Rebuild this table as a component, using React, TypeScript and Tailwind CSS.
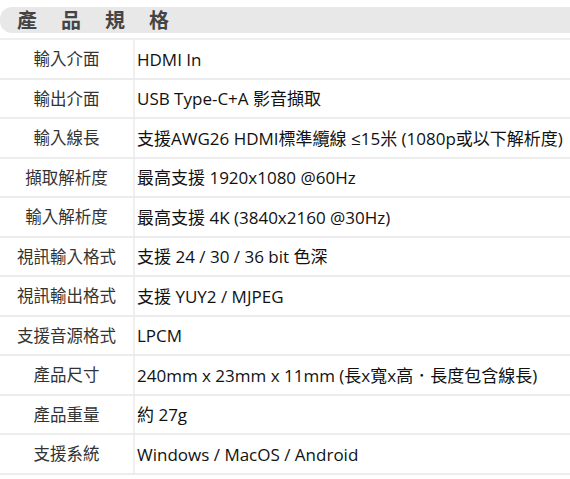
const specs: [string, string][] = [
  ["輸入介面", "HDMI In"],
  ["輸出介面", "USB Type-C+A 影音擷取"],
  ["輸入線長", "支援AWG26 HDMI標準纜線 ≤15米 (1080p或以下解析度)"],
  ["擷取解析度", "最高支援 1920x1080 @60Hz"],
  ["輸入解析度", "最高支援 4K (3840x2160 @30Hz)"],
  ["視訊輸入格式", "支援 24 / 30 / 36 bit 色深"],
  ["視訊輸出格式", "支援 YUY2 / MJPEG"],
  ["支援音源格式", "LPCM"],
  ["產品尺寸", "240mm x 23mm x 11mm (長x寬x高．長度包含線長)"],
  ["產品重量", "約 27g"],
  ["支援系統", "Windows / MacOS / Android"],
];

export default function App() {
  return (
    <div
      className="w-[570px] h-[479px] bg-white overflow-hidden"
      style={{ fontFamily: '"Open Sans", "Noto Sans CJK TC", sans-serif' }}
    >
      <div className="pt-[7px]">
        <div className="h-[26px] rounded-l-[12px] bg-[#e8e8e8] flex items-center pl-[17px]">
          <span
            className="text-[20px] font-bold text-[#444] tracking-[24px] leading-none"
            style={{ fontFamily: '"Noto Sans CJK TC", sans-serif' }}
          >
            產品規格
          </span>
        </div>
      </div>
      <div className="mt-[5px] border-t-2 border-[#efefef]">
        {specs.map(([label, value]) => (
          <div key={label} className="flex h-[39.5px] border-b-2 border-[#ececec]">
            <div className="w-[135px] shrink-0 pt-[2px] border-r-2 border-[#f0f0f0] flex items-center justify-center text-[16.5px] text-[#333]">
              {label}
            </div>
            <div className="pl-[2px] pt-[1px] flex items-center text-[17px] text-[#111] whitespace-nowrap">
              {value}
            </div>
          </div>
        ))}
      </div>
    </div>
  );
}
